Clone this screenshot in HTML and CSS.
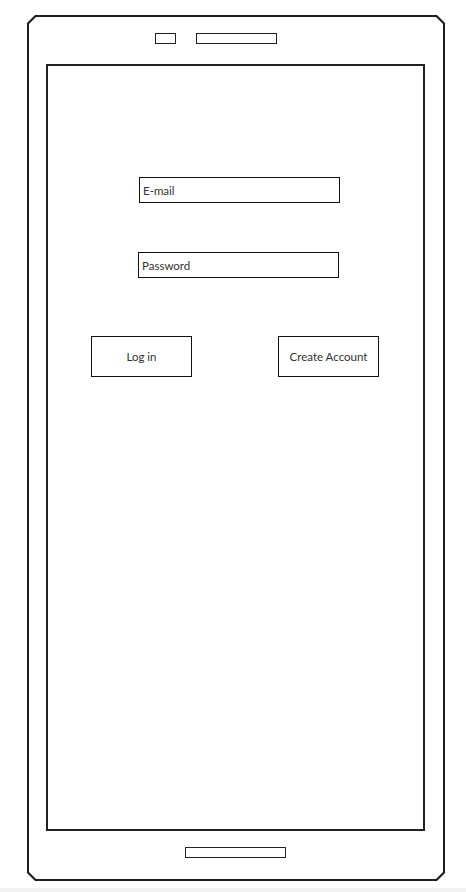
FILE: index.html
```html
<!DOCTYPE html>
<html lang="en">
<head>
    <meta charset="UTF-8">
    <meta name="viewport" content="width=device-width, initial-scale=1.0">
    <title>Login</title>
    <link rel="stylesheet" href="styles.css">
</head>
<body>

    <div class="phone">
        <div class="phone-body">
            <div class="phone-top">
                <div class="camera"></div>
                <div class="speaker"></div>
            </div>

            <div class="screen">
                <div class="field field-email">E-mail</div>
                <div class="field field-password">Password</div>

                <div class="actions">
                    <div class="btn btn-login">Log in</div>
                    <div class="btn btn-create">Create Account</div>
                </div>
            </div>

            <div class="home-button"></div>
        </div>
    </div>

    <div class="page-edge"></div>

</body>
</html>
```

FILE: styles.css
```css
body {
    margin: 0;
    font-family: Lato, "Open Sans", sans-serif;
    font-size: 11.5px;
    color: #333;
    background: white;
}
.phone {
    margin: 15px 0 0 27px;
    width: 418px;
    height: 866px;
    padding: 2px;
    box-sizing: border-box;
    background: #1e1e1e;
    clip-path: polygon(8px 0, calc(100% - 8px) 0, 100% 8px, 100% calc(100% - 8px), calc(100% - 8px) 100%, 8px 100%, 0 calc(100% - 8px), 0 8px);
}
.phone-body {
    height: 100%;
    background: white;
    display: flex;
    flex-direction: column;
    clip-path: polygon(7px 0, calc(100% - 7px) 0, 100% 7px, 100% calc(100% - 7px), calc(100% - 7px) 100%, 7px 100%, 0 calc(100% - 7px), 0 7px);
}
.phone-top {
    display: flex;
    gap: 20px;
    padding: 16px 0 0 126px;
}
.camera, .speaker, .home-button {
    height: 11px;
    border: 1px solid #222;
    box-sizing: border-box;
}
.camera {
    width: 21px;
}
.speaker {
    width: 81px;
}
.screen {
    margin: 20px 0 0 17px;
    width: 379px;
    height: 767px;
    border: 2px solid #222;
    box-sizing: border-box;
    display: flex;
    flex-direction: column;
}
.field {
    width: 201px;
    height: 26px;
    border: 1px solid #111;
    box-sizing: border-box;
    padding-left: 3px;
    display: flex;
    align-items: center;
}
.field-email {
    margin: 111px 0 0 91px;
}
.field-password {
    margin: 49px 0 0 90px;
}
.actions {
    display: flex;
    gap: 86px;
    margin: 58px 0 0 43px;
}
.btn {
    width: 101px;
    height: 41px;
    border: 1px solid #111;
    box-sizing: border-box;
    display: flex;
    align-items: center;
    justify-content: center;
}
.home-button {
    width: 101px;
    margin: 16px 0 0 156px;
}
.page-edge {
    margin-top: 7px;
    height: 4px;
    background: #f2f2f2;
}
```
